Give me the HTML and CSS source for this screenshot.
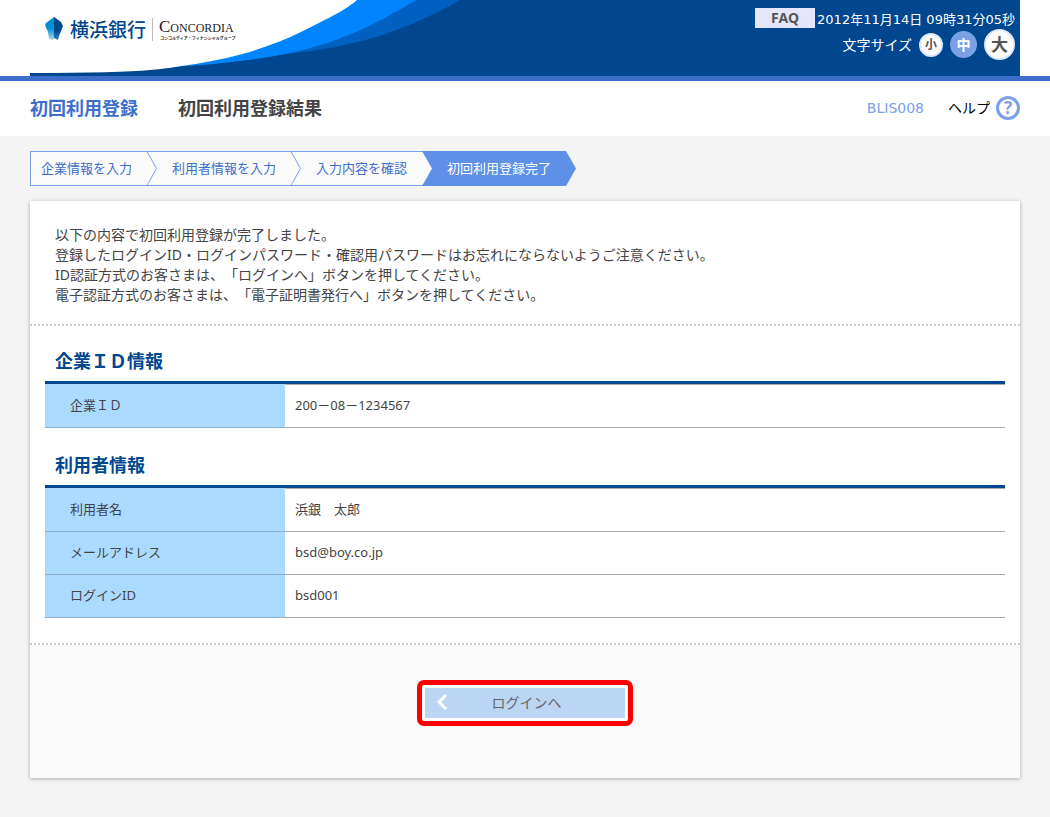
FILE: index.html
```
<!DOCTYPE html>
<html lang="ja">
<head>
<meta charset="utf-8">
<title>初回利用登録結果</title>
<link rel="stylesheet" href="styles.css">
</head>
<body>
<header class="site-header">
  <div class="banner">
    <div class="brand">
      <svg class="swoosh" width="460" height="76" viewBox="0 0 460 76" aria-hidden="true">
        <path fill="#0060c0" d="M0 0H430C370 34 318 50 232 56L160 66L0 73Z"/>
        <path fill="#0084ff" d="M0 0H386C326 37 280 53 210 61Q180 65 155 66L0 73Z"/>
        <path fill="#fff" d="M0 0H327C318 8 307 14 273 31C230 52 190 62 120 70Q90 73 0 73Z"/>
      </svg>
      <div class="logo">
        <svg class="logo-mark" width="20" height="26" viewBox="0 0 20 26" aria-hidden="true">
          <defs>
            <linearGradient id="left" x1="0" y1="0" x2="0" y2="1"><stop offset="0.5" stop-color="#0090d8"/><stop offset="1" stop-color="#b5d9f0"/></linearGradient>
            <linearGradient id="right" x1="0" y1="0" x2="0" y2="1"><stop offset="0.6" stop-color="#00478c"/><stop offset="1" stop-color="#2f86c8"/></linearGradient>
          </defs>
          <path fill="url(#left)" d="M10 1V22L9 24L5 23L4 16L1 9L2 7Z"/>
          <path fill="url(#right)" d="M10 1L17 6L19 10L15 20L14 24L10 22Z"/>
        </svg>
        <span class="bank-name">横浜銀行</span>
        <span class="group-name"><span class="group-latin">Concordia</span><span class="group-kana">コンコルディア・フィナンシャルグループ</span></span>
      </div>
    </div>
    <div class="tools">
      <div class="tool-row"><a class="faq" href="#">FAQ</a><time class="clock" datetime="2012-11-14T09:31:05">2012年11月14日 09時31分05秒</time></div>
      <div class="tool-row sizes"><span>文字サイズ</span><button type="button" class="size small">小</button><button type="button" class="size medium">中</button><button type="button" class="size large">大</button></div>
    </div>
  </div>
</header>
<div class="title-bar">
  <p class="section-title">初回利用登録</p>
  <h1 class="page-title">初回利用登録結果</h1>
  <span class="screen-id">BLIS008</span>
  <a class="help" href="#">ヘルプ<span class="help-mark">?</span></a>
</div>
<main class="content">
  <ol class="steps">
    <li class="step first">企業情報を入力</li>
    <li class="divider" aria-hidden="true"><svg width="10" height="35" viewBox="0 0 10 35"><path d="M0 .5L9.500 17.500L0 34.500" fill="none" stroke="#7ba3e8"/></svg></li>
    <li class="step">利用者情報を入力</li>
    <li class="divider" aria-hidden="true"><svg width="10" height="35" viewBox="0 0 10 35"><path d="M0 .5L9.500 17.500L0 34.500" fill="none" stroke="#7ba3e8"/></svg></li>
    <li class="step">入力内容を確認</li>
    <li class="divider" aria-hidden="true"><svg width="10" height="35" viewBox="0 0 10 35"><path d="M0 0H10V35H0L10 17.500Z" fill="#5f90e8"/></svg></li>
    <li class="step current" aria-current="step">初回利用登録完了</li>
    <li class="tip" aria-hidden="true"><svg width="10" height="35" viewBox="0 0 10 35"><path d="M0 0L10 17.500L0 35Z" fill="#5f90e8"/></svg></li>
  </ol>
  <div class="card">
    <p class="message">以下の内容で初回利用登録が完了しました。<br>登録したログインID・ログインパスワード・確認用パスワードはお忘れにならないようご注意ください。<br>ID認証方式のお客さまは、「ログインへ」ボタンを押してください。<br>電子認証方式のお客さまは、「電子証明書発行へ」ボタンを押してください。</p>
    <div class="dots"></div>
    <section class="info">
      <h2>企業ＩＤ情報</h2>
      <table>
        <tr><th scope="row">企業ＩＤ</th><td>200－08－1234567</td></tr>
      </table>
      <h2>利用者情報</h2>
      <table>
        <tr><th scope="row">利用者名</th><td>浜銀　太郎</td></tr>
        <tr><th scope="row">メールアドレス</th><td>bsd@boy.co.jp</td></tr>
        <tr><th scope="row">ログインID</th><td>bsd001</td></tr>
      </table>
    </section>
    <div class="dots"></div>
    <div class="actions">
      <div class="highlight">
        <button type="button" class="login"><svg width="12" height="18" viewBox="0 0 12 18" aria-hidden="true"><path d="M10 2L3 9L10 16" fill="none" stroke="#fff" stroke-width="3"/></svg><span>ログインへ</span></button>
      </div>
    </div>
  </div>
</main>
</body>
</html>
```
FILE: styles.css
```
* { box-sizing: border-box; }
body {
  margin: 0;
  background: #f4f4f4;
  color: #444;
  font: 14px/20px "Noto Sans", "Noto Sans CJK JP", sans-serif;
  text-spacing-trim: space-all;
}
h1, h2, p, ol { margin: 0; padding: 0; }
button { font-family: inherit; cursor: pointer; }

.site-header {
  padding: 0 30px;
  background: #fff;
  border-bottom: 5px solid #3d6ec9;
}
.banner {
  display: flex;
  justify-content: space-between;
  background: #00478f;
}
.brand { display: grid; }
.brand > * { grid-area: 1 / 1; }
.swoosh { display: block; }
.logo {
  display: flex;
  align-items: center;
  align-self: start;
  gap: 6px;
  padding: 16px 0 0 14px;
}
.bank-name {
  color: #00478f;
  font-family: "Noto Sans CJK JP", sans-serif;
  font-size: 19px;
  font-weight: 500;
  line-height: 24px;
}
.group-name {
  display: flex;
  flex-direction: column;
  padding-left: 6px;
  border-left: 1px solid #bbb;
  color: #222;
}
.group-latin {
  font-family: "Liberation Serif", serif;
  font-size: 17px;
  font-variant: small-caps;
  line-height: 17px;
}
.group-kana {
  padding-left: 1px;
  font-family: "Noto Sans CJK JP", sans-serif;
  font-size: 4px;
  font-weight: 700;
  line-height: 6px;
}
.tools {
  display: flex;
  flex-direction: column;
  align-items: flex-end;
  padding: 8px 5px 0 0;
  color: #fff;
}
.tool-row { display: flex; align-items: flex-start; gap: 2px; }
.faq {
  width: 60px;
  background: #e6e6fa;
  color: #555;
  font-weight: 700;
  text-align: center;
  text-decoration: none;
}
.clock {
  padding-top: 2px;
  font-family: "DejaVu Sans", "Noto Sans CJK JP", sans-serif;
  font-size: 13px;
}
.sizes { align-items: center; gap: 7px; margin-top: -1px; }
.size {
  display: grid;
  place-items: center;
  padding: 0;
  border: 2px solid #dfe8fa;
  border-radius: 50%;
  background: #fff;
  color: #555;
  font-weight: 700;
  line-height: 1;
}
.small { width: 24px; height: 24px; font-size: 12px; }
.medium { width: 27px; height: 27px; border-color: #7ba0e6; background: #7ba0e6; color: #fff; font-size: 14px; }
.large { width: 31px; height: 31px; font-size: 17px; }

.title-bar {
  display: flex;
  align-items: center;
  height: 55px;
  padding: 0 30px 2px;
  background: #fff;
}
.section-title, .page-title { font-size: 18px; font-weight: 700; }
.section-title { color: #3d6ec9; }
.page-title { margin-left: 40px; }
.screen-id {
  margin-left: auto;
  color: #7ba0e6;
  font-family: "DejaVu Sans", sans-serif;
}
.help {
  display: flex;
  align-items: center;
  gap: 6px;
  margin-left: 24px;
  color: #000;
  text-decoration: none;
}
.help-mark {
  display: grid;
  place-items: center;
  width: 24px;
  height: 24px;
  border: 3px solid #7ba0e6;
  border-radius: 50%;
  color: #7ba0e6;
  font-size: 17px;
  font-weight: 700;
  line-height: 18px;
}

.content { padding: 15px 30px 40px; }
.steps {
  display: flex;
  width: fit-content;
  list-style: none;
  color: #3d6ec9;
  font-size: 13px;
  line-height: 33px;
}
.steps svg { display: block; margin: -1px 0; }
.step, .divider {
  border: solid #7ba3e8;
  border-width: 1px 0;
  background: #fafafa;
}
.step { padding: 0 15px; }
.first { padding-left: 10px; border-left-width: 1px; }
.current { background: #5f90e8; border-color: #5f90e8; color: #fff; }
.tip { padding: 1px 0; }

.card {
  margin-top: 15px;
  background: #fff;
  box-shadow: 0 1px 4px rgba(0, 0, 0, 0.3);
}
.message { padding: 24px 25px 19px; }
.dots {
  height: 2px;
  background: repeating-linear-gradient(90deg, #ccc 0 2px, transparent 2px 4px);
}
.info { padding: 0 15px 23px; }
h2 {
  padding: 25px 10px 10px;
  color: #00478f;
  font-size: 18px;
  line-height: 20px;
}
table {
  width: 100%;
  margin-bottom: 2px;
  border-collapse: separate;
  border-spacing: 0;
  border-top: 3px solid #00478f;
  font-size: 13px;
}
th, td {
  height: 43px;
  padding: 0 10px 2px;
  border-bottom: 1px solid #aaa;
  font-weight: 400;
  text-align: left;
}
tr:first-child > * { height: 44px; }
tr:first-child td { border-top: 1px solid #aaa; }
th {
  width: 25%;
  padding-left: 25px;
  background: #aadaff;
  border-bottom-color: #8db0cc;
}
.actions {
  display: flex;
  justify-content: center;
  padding: 35px 0 52px;
  background: #fafafa;
}
.highlight {
  padding: 3px;
  border: 5px solid #f00;
  border-radius: 7px;
  background: #fff;
}
.login {
  display: flex;
  align-items: center;
  width: 200px;
  height: 30px;
  padding: 0 20px 2px 11px;
  border: 0;
  background: #bbd5f5;
  color: #666;
  font-size: 14px;
}
.login span { flex: 1; }
```
